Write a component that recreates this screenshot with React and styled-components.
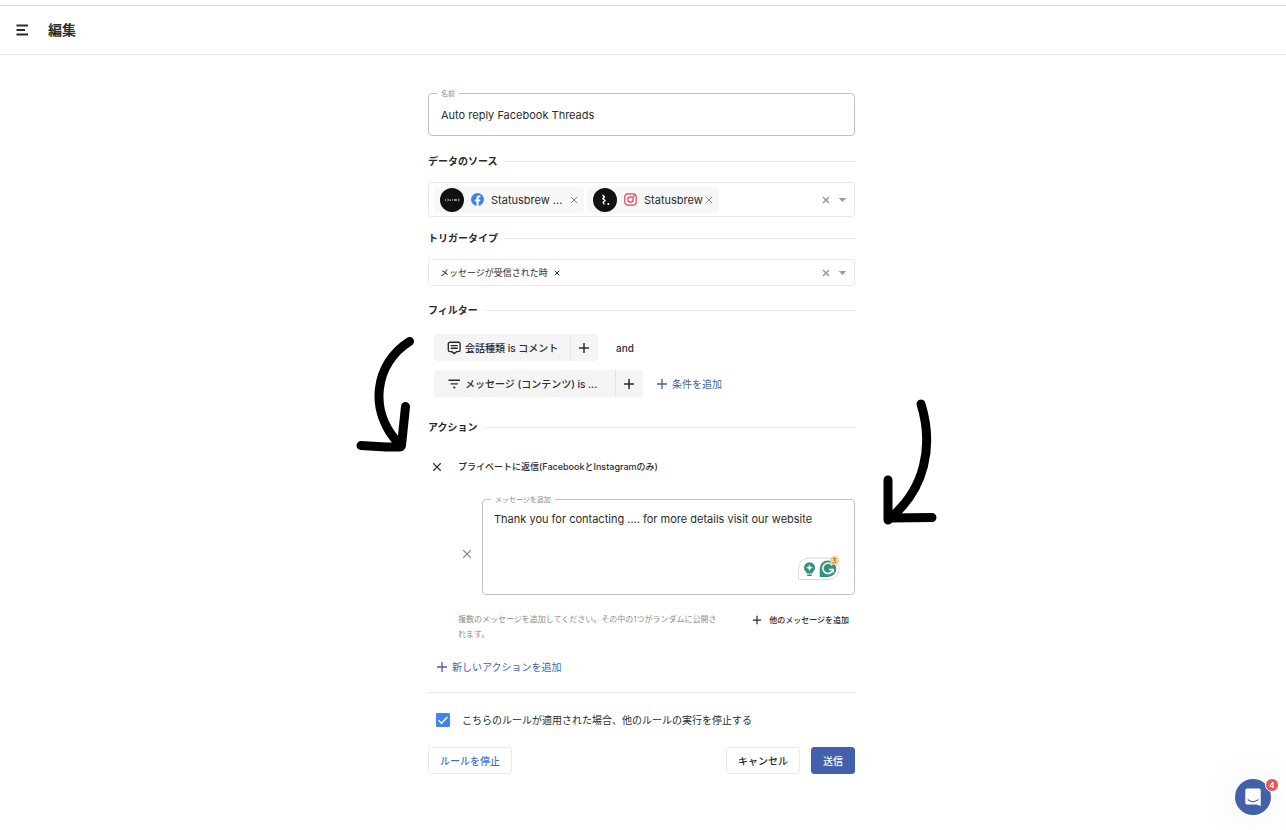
import React from "react";
import styled, { createGlobalStyle, ThemeProvider } from "styled-components";

const theme = {
  text: "#2b2b2b",
  muted: "#8c8c8c",
  line: "#e9e9e9",
  outline: "#bfbfbf",
  fill: "#f4f4f4",
  primary: "#4361aa",
  link: "#3b73d9",
};

const GlobalStyle = createGlobalStyle`
  *, *::before, *::after { box-sizing: border-box; }
  body {
    margin: 0;
    background: #fff;
    color: ${theme.text};
    font-family: Inter, "Noto Sans CJK JP", sans-serif;
    font-size: 10px;
    line-height: 16px;
  }
  button, input, textarea { font: inherit; color: inherit; }
  button { margin: 0; padding: 0; border: 0; background: none; cursor: pointer; }
  svg { display: block; flex: none; }
`;

const Page = styled.div`
  min-height: 100vh;
  padding-top: 5px;
`;

const Header = styled.header`
  display: flex;
  align-items: center;
  gap: 19px;
  height: 50px;
  padding: 0 16px;
  border-top: 1px solid #dedede;
  border-bottom: 1px solid ${(p) => p.theme.line};
`;

const Title = styled.h1`
  margin: 0;
  font-size: 14px;
  font-weight: 600;
  line-height: 20px;
`;

const IconButton = styled.button`
  display: flex;
  align-items: center;
  justify-content: center;
  flex: none;
  color: ${(p) => p.$color || p.theme.text};
`;

const Main = styled.main`
  padding: 38px 19px 56px 16px;
`;

const Form = styled.form`
  position: relative;
  max-width: 427px;
  margin: 0 auto;
`;

const Outlined = styled.div`
  position: relative;
  flex: 1;
  min-width: 0;
`;

const FloatingLabel = styled.label`
  position: absolute;
  top: -4px;
  left: 9px;
  padding: 0 4px;
  background: #fff;
  color: ${(p) => p.theme.muted};
  font-size: 7px;
  line-height: 10px;
`;

const TextInput = styled.input`
  display: block;
  width: 100%;
  height: 43px;
  padding: 0 12px;
  border: 1px solid ${(p) => p.theme.outline};
  border-radius: 4px;
  background: #fff;
  font-size: 11px;
`;

const TextArea = styled.textarea`
  display: block;
  width: 100%;
  height: 96px;
  padding: 11px;
  border: 1px solid ${(p) => p.theme.outline};
  border-radius: 4px;
  background: #fff;
  font-size: 11px;
  line-height: 16px;
  resize: none;
`;

const SectionTitle = styled.h2`
  display: flex;
  align-items: center;
  gap: 7px;
  margin: ${(p) => p.$top}px 0 ${(p) => p.$bottom}px;
  font-size: 10px;
  font-weight: 600;
  line-height: 16px;
  &::after {
    content: "";
    flex: 1;
    height: 1px;
    background: ${(p) => p.theme.line};
  }
`;

const SelectBox = styled.div`
  display: flex;
  align-items: center;
  gap: 3px;
  height: ${(p) => p.$height}px;
  padding: 0 7px 0 5px;
  border: 1px solid ${(p) => p.theme.line};
  border-radius: 3px;
`;

const SelectControls = styled.div`
  display: flex;
  align-items: center;
  gap: 8px;
  margin-left: auto;
`;

const Chip = styled.span`
  display: flex;
  align-items: center;
  gap: 7px;
  height: 26px;
  padding: 0 6px;
  border-radius: 3px;
  background: #f7f7f7;
`;

const ChipText = styled.span`
  min-width: ${(p) => p.$min || 0}px;
  margin-right: -5px;
  font-size: 11px;
  white-space: nowrap;
`;

const Tag = styled.span`
  display: flex;
  align-items: center;
  gap: 6px;
  padding: 0 6px;
  font-size: 9px;
`;

const Filters = styled.div`
  display: flex;
  flex-direction: column;
  gap: 9px;
  padding-left: 6px;
`;

const FilterRow = styled.div`
  display: flex;
  align-items: center;
`;

const FilterGroup = styled.div`
  display: flex;
  height: 27px;
  border-radius: 3px;
  overflow: hidden;
  background: ${(p) => p.theme.fill};
`;

const FilterButton = styled.button`
  display: flex;
  align-items: center;
  gap: 4px;
  width: ${(p) => p.$width}px;
  padding-left: 13px;
  font-weight: 500;
  white-space: nowrap;
`;

const FilterAdd = styled(IconButton)`
  width: 28px;
  padding-right: 2px;
  border-left: 1px solid #e2e2e2;
`;

const Joiner = styled.span`
  margin-left: 18px;
  font-weight: 500;
`;

const LinkButton = styled.button`
  display: flex;
  align-items: center;
  gap: 4px;
  height: 16px;
  margin: ${(p) => p.$margin || "0"};
  color: ${(p) => p.theme.primary};
`;

const ActionHead = styled.div`
  display: flex;
  align-items: center;
  gap: 16px;
  height: 16px;
  padding-left: 4px;
  font-size: 9px;
  font-weight: 500;
`;

const MessageRow = styled.div`
  display: flex;
  align-items: center;
  gap: 10px;
  margin-top: 24px;
  padding-left: 34px;
`;

const RemoveMessage = styled(IconButton)`
  margin-top: 14px;
`;

const Assistant = styled.div`
  position: absolute;
  right: 14px;
  bottom: 14px;
`;

const NoteRow = styled.div`
  display: flex;
  align-items: flex-start;
  justify-content: space-between;
  margin-top: 17px;
  padding: 0 6px 0 30px;
`;

const Note = styled.p`
  max-width: 266px;
  margin: 0;
  color: ${(p) => p.theme.muted};
  font-size: 8px;
  line-height: 15px;
`;

const AddMessage = styled.button`
  display: flex;
  align-items: center;
  gap: 7px;
  font-size: 8px;
  font-weight: 500;
  white-space: nowrap;
`;

const StopRule = styled.label`
  display: flex;
  align-items: center;
  gap: 12px;
  height: 55px;
  padding-left: 8px;
  border-top: 1px solid ${(p) => p.theme.line};
`;

const CheckWrap = styled.span`
  display: grid;
  color: #fff;
  > * { grid-area: 1 / 1; }
  svg { pointer-events: none; }
`;

const Checkbox = styled.input`
  appearance: none;
  width: 14px;
  height: 14px;
  margin: 0;
  border: 1px solid #4285e8;
  border-radius: 1px;
  &:checked { background: #4285e8; }
`;

const Buttons = styled.div`
  display: flex;
  gap: 11px;
`;

const Button = styled.button`
  height: 27px;
  padding: 0 11px;
  border: 1px solid ${(p) => (p.$primary ? p.theme.primary : p.theme.line)};
  border-radius: 3px;
  background: ${(p) => (p.$primary ? p.theme.primary : "#fff")};
  color: ${(p) => p.$color || p.theme.text};
  font-weight: 500;
  &:first-child { margin-right: auto; }
`;

const Arrow = styled.svg`
  position: absolute;
  top: ${(p) => p.$top}px;
  left: ${(p) => p.$left}px;
  pointer-events: none;
`;

const Messenger = styled.button`
  position: fixed;
  right: 15px;
  bottom: 15px;
  display: flex;
  align-items: center;
  justify-content: center;
  width: 36px;
  height: 36px;
  border-radius: 50%;
  background: ${(p) => p.theme.primary};
  box-shadow: 0 1px 40px 8px rgba(0, 0, 0, 0.04);
`;

const Badge = styled.span`
  position: absolute;
  top: -1px;
  right: -8px;
  width: 14px;
  height: 14px;
  border: 1px solid #fff;
  border-radius: 50%;
  background: #e5565a;
  color: #fff;
  font-size: 8px;
  font-weight: 600;
  line-height: 12px;
  text-align: center;
`;

const Cross = ({ size = 8, width = 1 }) => (
  <svg width={size} height={size} viewBox="0 0 8 8" fill="none" stroke="currentColor" strokeWidth={width} aria-hidden="true">
    <path d="M1 1l6 6M7 1l-6 6" />
  </svg>
);

const Plus = ({ size = 12, width = 1.3 }) => (
  <svg width={size} height={size} viewBox="0 0 12 12" fill="none" stroke="currentColor" strokeWidth={width} aria-hidden="true">
    <path d="M6 1v10M1 6h10" />
  </svg>
);

const MenuIcon = () => (
  <svg width="13" height="12" viewBox="0 0 13 12" fill="none" stroke="currentColor" strokeWidth="2" aria-hidden="true">
    <path d="M.5 1.500h11.500M.5 6h8.500M.5 10.500h11.500" />
  </svg>
);

const CommentIcon = () => (
  <svg width="14" height="14" viewBox="0 0 14 14" fill="none" stroke="currentColor" strokeWidth="1.400" aria-hidden="true">
    <path d="M3 1.200h8.400a1.700 1.700 0 0 1 1.700 1.700v6a1.700 1.700 0 0 1-1.700 1.700H9.700L7.200 12.600l-2.500-2H3a1.700 1.700 0 0 1-1.700-1.700v-6A1.700 1.700 0 0 1 3 1.200z" strokeLinejoin="round" />
    <path d="M3.700 4.600h7M3.700 7.200h7" />
  </svg>
);

const FilterIcon = () => (
  <svg width="14" height="10" viewBox="0 0 14 10" fill="none" stroke="currentColor" strokeWidth="1.400" aria-hidden="true">
    <path d="M1.500 1.300h11.500M3.800 4.900h7M6.200 8.500h2.200" />
  </svg>
);

const Facebook = () => (
  <svg width="13" height="13" viewBox="0 0 24 24" aria-hidden="true">
    <circle cx="12" cy="12" r="12" fill="#4080e8" />
    <path fill="#fff" d="M16.700 15.500l.5-3.500h-3.300V9.800c0-1 .5-1.900 2-1.900h1.500V5s-1.400-.2-2.700-.2c-2.700 0-4.500 1.600-4.500 4.600V12H7.100v3.500h3.100v8.400a12 12 0 0 0 3.700 0v-8.400z" />
  </svg>
);

const Instagram = () => (
  <svg width="13" height="13" viewBox="0 0 13 13" fill="none" stroke="#e0455a" strokeWidth="1.200" aria-hidden="true">
    <rect x=".8" y=".8" width="11.400" height="11.400" rx="3.200" />
    <circle cx="6.500" cy="6.500" r="2.700" />
    <circle cx="9.800" cy="3.200" r=".4" />
  </svg>
);

const BrandAvatar = () => (
  <svg width="24" height="24" viewBox="0 0 24 24" aria-hidden="true">
    <circle cx="12" cy="12" r="12" fill="#111" />
    <path d="M5.500 11v2M6.700 11h1M6.700 13h1M8.700 11v2M10 11v2l1-1M12.500 13v-2M14.500 11v2l1-2v2M16.500 11v2M18 11h1v2h-1" stroke="#aaa" strokeWidth=".8" fill="none" />
  </svg>
);

const SquiggleAvatar = () => (
  <svg width="24" height="24" viewBox="0 0 24 24" aria-hidden="true">
    <circle cx="12" cy="12" r="12" fill="#111" />
    <path d="M9.500 7l2 1.700-1.700 2 2.300 1.800-2 2 1.200 2" stroke="#fff" strokeWidth="1.400" fill="none" strokeLinejoin="round" />
    <circle cx="15.300" cy="16" r="1" fill="#fff" />
  </svg>
);

const Check = () => (
  <svg width="14" height="14" viewBox="0 0 14 14" fill="none" stroke="currentColor" strokeWidth="1.400" aria-hidden="true">
    <path d="M2.500 7.300l3 3 6-6.300" />
  </svg>
);

const AssistantIcons = () => (
  <svg width="43" height="26" viewBox="0 0 43 26" aria-hidden="true">
    <path d="M.5 24.500V13.500a10.500 10.500 0 0 1 10.500-10.500H30.500a10.750 10.750 0 0 1 0 21.500z" fill="#fff" stroke="#d8d8d8" />
    <circle cx="11.500" cy="12.700" r="5.500" fill="#37907f" />
    <path d="M8.500 16.500h6v2h-6zM9.200 19.600h4.600v1.400H9.200z" fill="#37907f" />
    <path d="M11.500 9.300l1 2.400 2.400 1-2.400 1-1 2.400-1-2.400-2.400-1 2.400-1z" fill="#fff" />
    <path d="M21.700 22V13.700a8.300 8.300 0 1 1 8.300 8.300z" fill="#37907f" />
    <path d="M34.200 10.200a5.200 5.200 0 1 0 .9 4.300h-4.200M35.200 14.500v3" stroke="#fff" strokeWidth="1.500" fill="none" />
    <circle cx="36.500" cy="5.500" r="4.500" fill="#f6cf8f" />
    <path d="M35 3.500h2.600l-1.500 1.800a1.400 1.400 0 1 1-1.300 2" stroke="#9a6a20" strokeWidth=".9" fill="none" />
  </svg>
);

const MessengerIcon = () => (
  <svg width="18" height="20" viewBox="0 0 18 20" aria-hidden="true">
    <path d="M3 1.500h12a1.700 1.700 0 0 1 1.700 1.700V19l-4-1.500H3a1.700 1.700 0 0 1-1.700-1.700V3.200A1.700 1.700 0 0 1 3 1.500z" fill="#fff" />
    <path d="M4 12.800c3 2.400 7 2.400 10 0" stroke="#4361aa" strokeWidth="1.200" fill="none" strokeLinecap="round" />
  </svg>
);

const Controls = () => (
  <SelectControls>
    <IconButton type="button" aria-label="クリア" $color="#999">
      <Cross width={1.5} />
    </IconButton>
    <IconButton type="button" aria-label="開く" $color="#999">
      <svg width="9" height="4" viewBox="0 0 9 4" aria-hidden="true">
        <path d="M.7 0h7.600L4.500 4z" fill="currentColor" />
      </svg>
    </IconButton>
  </SelectControls>
);

const Source = ({ avatar, network, name, min }) => (
  <Chip>
    {avatar}
    {network}
    <ChipText $min={min}>{name}</ChipText>
    <IconButton type="button" aria-label="削除" $color="#777">
      <Cross width={0.9} />
    </IconButton>
  </Chip>
);

const Filter = ({ icon, width, children }) => (
  <FilterGroup>
    <FilterButton type="button" $width={width}>
      {icon}
      {children}
    </FilterButton>
    <FilterAdd type="button" aria-label="追加">
      <Plus width={1.500} />
    </FilterAdd>
  </FilterGroup>
);

export default function App() {
  return (
    <ThemeProvider theme={theme}>
      <GlobalStyle />
      <Page>
        <Header>
          <IconButton type="button" aria-label="メニュー">
            <MenuIcon />
          </IconButton>
          <Title>編集</Title>
        </Header>
        <Main>
          <Form onSubmit={(e) => e.preventDefault()}>
            <Outlined>
              <TextInput id="name" defaultValue="Auto reply Facebook Threads" />
              <FloatingLabel htmlFor="name">名前</FloatingLabel>
            </Outlined>

            <SectionTitle $top={17} $bottom={13}>データのソース</SectionTitle>
            <SelectBox $height={35}>
              <Source avatar={<BrandAvatar />} network={<Facebook />} name="Statusbrew ..." min={77} />
              <Source avatar={<SquiggleAvatar />} network={<Instagram />} name="Statusbrew" />
              <Controls />
            </SelectBox>

            <SectionTitle $top={13} $bottom={13}>トリガータイプ</SectionTitle>
            <SelectBox $height={27}>
              <Tag>
                メッセージが受信された時
                <IconButton type="button" aria-label="削除">
                  <Cross size={6} width={1.300} />
                </IconButton>
              </Tag>
              <Controls />
            </SelectBox>

            <SectionTitle $top={16} $bottom={16}>フィルター</SectionTitle>
            <Filters>
              <FilterRow>
                <Filter icon={<CommentIcon />} width={136}>会話種類 is コメント</Filter>
                <Joiner>and</Joiner>
              </FilterRow>
              <FilterRow>
                <Filter icon={<FilterIcon />} width={181}>メッセージ (コンテンツ) is ...</Filter>
                <LinkButton type="button" $margin="0 0 0 13px">
                  <Plus />
                  条件を追加
                </LinkButton>
              </FilterRow>
            </Filters>

            <SectionTitle $top={22} $bottom={24}>アクション</SectionTitle>
            <ActionHead>
              <IconButton type="button" aria-label="アクションを削除">
                <Cross size={10} width={0.900} />
              </IconButton>
              プライベートに返信(FacebookとInstagramのみ)
            </ActionHead>
            <MessageRow>
              <RemoveMessage type="button" aria-label="メッセージを削除" $color="#888">
                <Cross size={10} width={0.900} />
              </RemoveMessage>
              <Outlined>
                <TextArea id="message" defaultValue="Thank you for contacting .... for more details visit our website" />
                <FloatingLabel htmlFor="message">メッセージを追加</FloatingLabel>
                <Assistant>
                  <AssistantIcons />
                </Assistant>
              </Outlined>
            </MessageRow>
            <NoteRow>
              <Note>複数のメッセージを追加してください。その中の1つがランダムに公開されます。</Note>
              <AddMessage type="button">
                <Plus size={10} width={1.500} />
                他のメッセージを追加
              </AddMessage>
            </NoteRow>
            <LinkButton type="button" $margin="17px 0 17px 8px">
              <Plus />
              新しいアクションを追加
            </LinkButton>

            <StopRule>
              <CheckWrap>
                <Checkbox type="checkbox" defaultChecked />
                <Check />
              </CheckWrap>
              こちらのルールが適用された場合、他のルールの実行を停止する
            </StopRule>
            <Buttons>
              <Button type="button" $color={theme.link}>ルールを停止</Button>
              <Button type="button">キャンセル</Button>
              <Button type="submit" $primary $color="#fff">送信</Button>
            </Buttons>

            <Arrow $top={243} $left={-72} width="60" height="118" viewBox="0 0 60 118" fill="none" stroke="#000" strokeWidth="9" strokeLinecap="round" strokeLinejoin="round" aria-hidden="true">
              <path d="M53.500 5.500C19 27 11 75 44 109" />
              <path d="M49.500 70.500L45.500 109.500Q45 111 43 111L30 111L5 109.500" />
            </Arrow>
            <Arrow $top={306} $left={454} width="56" height="126" viewBox="0 0 56 126" fill="none" stroke="#000" strokeWidth="9" strokeLinecap="round" strokeLinejoin="round" aria-hidden="true">
              <path d="M39 5C52 47 43 91 7 120" />
              <path d="M6 81V121M6 119L50 118.500" />
            </Arrow>
          </Form>
        </Main>
        <Messenger type="button" aria-label="チャット">
          <MessengerIcon />
          <Badge>4</Badge>
        </Messenger>
      </Page>
    </ThemeProvider>
  );
}
